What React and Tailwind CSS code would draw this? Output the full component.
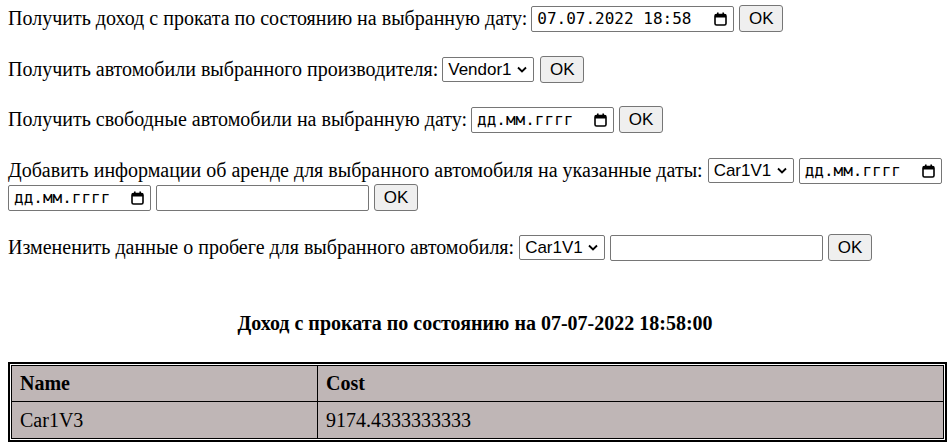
import React from 'react'

// Small calendar glyph drawn the way Chrome shows its date picker indicator.
function CalendarIcon() {
  return (
    <svg width="13" height="14" viewBox="0 0 13 14" className="shrink-0">
      <rect x="1" y="2.5" width="11" height="10.5" rx="1.5" fill="none" stroke="#000" strokeWidth="1.6" />
      <rect x="1" y="2.5" width="11" height="3" fill="#000" />
      <rect x="3" y="0.5" width="1.6" height="3" fill="#000" />
      <rect x="8.4" y="0.5" width="1.6" height="3" fill="#000" />
    </svg>
  )
}

function DateBox({ value = 'дд.мм.гггг', wide = false }) {
  return (
    <div
      className={`flex h-[26px] shrink-0 items-center justify-between rounded-[2px] border border-[#767676] bg-white pl-[5px] pr-[6px] font-['DejaVu_Sans_Mono',monospace] text-[16px] text-black ${wide ? 'w-[203px]' : 'w-[143px]'}`}
    >
      <span className="leading-none">{value}</span>
      <CalendarIcon />
    </div>
  )
}

function Select({ label, wide = false }) {
  return (
    <div
      className={`flex h-[25px] shrink-0 items-center justify-between rounded-[2px] border border-[#767676] bg-white pl-[5px] pr-[6px] font-['Liberation_Sans',Arial,sans-serif] text-[17px] text-black ${wide ? 'w-[92px]' : 'w-[86px]'}`}
    >
      <span className="leading-none">{label}</span>
      <svg width="10" height="7" viewBox="0 0 10 7">
        <path d="M1 1.5 L5 5.5 L9 1.5" fill="none" stroke="#000" strokeWidth="1.8" />
      </svg>
    </div>
  )
}

function TextBox() {
  return <div className="h-[26px] w-[213px] shrink-0 rounded-[2px] border border-[#767676] bg-white" />
}

function Ok() {
  return (
    <button
      type="button"
      className="flex h-[27px] w-[44px] shrink-0 items-center justify-center rounded-[3px] border border-[#767676] bg-[#efefef] font-['Liberation_Sans',Arial,sans-serif] text-[17px] leading-none text-black"
    >
      OK
    </button>
  )
}

function Row({ className = '', children }) {
  return <div className={`flex h-[27px] items-center whitespace-nowrap ${className}`}>{children}</div>
}

export default function App() {
  return (
    <div className="min-h-[448px] bg-white pt-[5px] font-['Liberation_Serif','Times_New_Roman',serif] text-[20px] leading-[23px] text-black">
      <div className="px-2">
        <Row>
          <span>Получить доход с проката по состоянию на выбранную дату:</span>
          <div className="ml-1"><DateBox value="07.07.2022 18:58" wide /></div>
          <div className="ml-[5px]"><Ok /></div>
        </Row>

        <Row className="mt-[24px]">
          <span>Получить автомобили выбранного производителя:</span>
          <div className="ml-1"><Select label="Vendor1" wide /></div>
          <div className="ml-[6px]"><Ok /></div>
        </Row>

        <Row className="mt-[23px]">
          <span>Получить свободные автомобили на выбранную дату:</span>
          <div className="ml-1"><DateBox /></div>
          <div className="ml-[5px]"><Ok /></div>
        </Row>

        <Row className="mt-[24px] h-[26px]">
          <span>Добавить информации об аренде для выбранного автомобиля на указанные даты:</span>
          <div className="ml-[5px]"><Select label="Car1V1" /></div>
          <div className="ml-[5px]"><DateBox /></div>
        </Row>
        <Row>
          <DateBox />
          <div className="ml-[5px]"><TextBox /></div>
          <div className="ml-[5px]"><Ok /></div>
        </Row>

        <Row className="mt-[23px]">
          <span>Измененить данные о пробеге для выбранного автомобиля:</span>
          <div className="ml-[5px]"><Select label="Car1V1" /></div>
          <div className="ml-[5px]"><TextBox /></div>
          <div className="ml-[5px]"><Ok /></div>
        </Row>
      </div>

      <h3 className="mt-[51px] text-center text-[20px] font-bold leading-[23px]">
        Доход с проката по состоянию на 07-07-2022 18:58:00
      </h3>

      {/* Result table: double outer frame, single inner rules */}
      <div className="ml-2 mt-[27px] w-[939px] border-2 border-black bg-white p-px">
        <table className="w-full border-collapse border border-black bg-[#bfb6b6]">
          <thead>
            <tr className="h-[36px]">
              <th className="w-[306px] border border-black px-2 text-left font-bold">Name</th>
              <th className="border border-black px-2 text-left font-bold">Cost</th>
            </tr>
          </thead>
          <tbody>
            <tr className="h-[37px]">
              <td className="border border-black px-2">Car1V3</td>
              <td className="border border-black px-2">9174.4333333333</td>
            </tr>
          </tbody>
        </table>
      </div>
    </div>
  )
}
